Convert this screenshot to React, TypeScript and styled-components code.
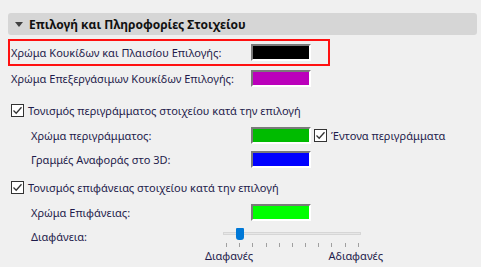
import React from 'react'
import styled, { createGlobalStyle } from 'styled-components'

const GlobalStyle = createGlobalStyle`
  body {
    margin: 0;
    background: #f0f0f0;
    font-family: 'Noto Sans', 'DejaVu Sans', sans-serif;
    font-size: 11px;
    color: #1e1b4b;
  }
`

const Panel = styled.div`
  width: 481px;
  height: 267px;
  padding: 13px 4px 0 8px;
  box-sizing: border-box;
`

const Header = styled.div`
  height: 22px;
  background: #d6d6d6;
  border-radius: 3px;
  display: flex;
  align-items: center;
  padding-left: 7px;
`

const Arrow = styled.span`
  width: 0;
  height: 0;
  border-left: 4px solid transparent;
  border-right: 4px solid transparent;
  border-top: 5px solid #404040;
  margin-right: 6px;
`

const HeaderTitle = styled.span`
  font-weight: 700;
  color: #111;
  font-size: 12px;
`

const Highlight = styled.div`
  margin-top: 4px;
  width: 322px;
  box-sizing: border-box;
  border: 2px solid #ff1010;
  height: 27px;
  padding-left: 1px;
  display: flex;
  align-items: center;
`

const Row = styled.div<{ $indent?: number; $top?: number }>`
  display: flex;
  align-items: center;
  height: 24px;
  margin-top: ${(p) => p.$top ?? 0}px;
  padding-left: ${(p) => 3 + (p.$indent ?? 0)}px;
`

const Label = styled.span<{ $width: number }>`
  width: ${(p) => p.$width}px;
  flex: none;
  white-space: nowrap;
`

const Swatch = styled.span<{ $color: string }>`
  width: 60px;
  height: 17px;
  box-sizing: border-box;
  flex: none;
  background: ${(p) => p.$color};
  border-style: solid;
  border-width: 2px;
  border-color: #7a7a7a #ffffff #ffffff #7a7a7a;
`

const CheckWrap = styled.label<{ $gap?: number }>`
  display: flex;
  align-items: center;
  margin-left: ${(p) => p.$gap ?? 0}px;
  white-space: nowrap;
`

const Box = styled.span`
  width: 13px;
  height: 13px;
  box-sizing: border-box;
  border: 1px solid #333;
  background: #fff;
  display: flex;
  align-items: center;
  justify-content: center;
  margin-right: 4px;
  flex: none;
`

const Check = ({ label, gap }: { label: string; gap?: number }) => (
  <CheckWrap $gap={gap}>
    <Box>
      <svg width="11" height="11" viewBox="0 0 11 11">
        <path d="M1.5 5.5 L4.2 8.2 L9.5 2.2" fill="none" stroke="#333" strokeWidth="1.3" />
      </svg>
    </Box>
    {label}
  </CheckWrap>
)

const SliderRow = styled.div`
  display: flex;
  align-items: flex-start;
  height: 24px;
  padding-left: 23px;
`

const SliderLabel = styled.span`
  width: 192px;
  margin-top: 5px;
  flex: none;
`

const Slider = styled.div`
  position: relative;
  width: 140px;
  height: 24px;
  flex: none;
`

const Track = styled.div`
  position: absolute;
  left: 0;
  top: 8px;
  width: 138px;
  height: 3px;
  background: #e7e7e7;
  border: 1px solid #d6d6d6;
  box-sizing: border-box;
`

const Thumb = styled.div`
  position: absolute;
  left: 13px;
  top: 4px;
  width: 8px;
  height: 12px;
  background: #0078d7;
  border-radius: 1px 1px 3px 3px;
`

const Tick = styled.span`
  position: absolute;
  top: 19px;
  width: 1px;
  height: 4px;
  background: #a0a0a0;
`

const ScaleLabels = styled.div`
  display: flex;
  justify-content: space-between;
  width: 178px;
  margin-left: 197px;
`

export default function App() {
  const ticks = Array.from({ length: 11 }, (_, i) => 3 + Math.round(i * 13.17))
  return (
    <>
      <GlobalStyle />
      <Panel>
        <Header>
          <Arrow />
          <HeaderTitle>Επιλογή και Πληροφορίες Στοιχείου</HeaderTitle>
        </Header>
        <Highlight>
          <Label $width={240}>Χρώμα Κουκίδων και Πλαισίου Επιλογής:</Label>
          <Swatch $color="#000000" />
        </Highlight>
        <Row>
          <Label $width={240}>Χρώμα Επεξεργάσιμων Κουκίδων Επιλογής:</Label>
          <Swatch $color="#bb00bb" />
        </Row>
        <Row $top={8}>
          <Check label="Τονισμός περιγράμματος στοιχείου κατά την επιλογή" />
        </Row>
        <Row $indent={20} $top={1}>
          <Label $width={220}>Χρώμα περιγράμματος:</Label>
          <Swatch $color="#00bb00" />
          <Check label="Έντονα περιγράμματα" gap={3} />
        </Row>
        <Row $indent={20}>
          <Label $width={220}>Γραμμές Αναφοράς στο 3D:</Label>
          <Swatch $color="#0000ff" />
        </Row>
        <Row $top={4}>
          <Check label="Τονισμός επιφάνειας στοιχείου κατά την επιλογή" />
        </Row>
        <Row $indent={20} $top={1}>
          <Label $width={220}>Χρώμα Επιφάνειας:</Label>
          <Swatch $color="#00ff00" />
        </Row>
        <SliderRow>
          <SliderLabel>Διαφάνεια:</SliderLabel>
          <Slider>
            <Track />
            <Thumb />
            {ticks.map((x) => (
              <Tick key={x} style={{ left: x }} />
            ))}
          </Slider>
        </SliderRow>
        <ScaleLabels>
          <span>Διαφανές</span>
          <span>Αδιαφανές</span>
        </ScaleLabels>
      </Panel>
    </>
  )
}
